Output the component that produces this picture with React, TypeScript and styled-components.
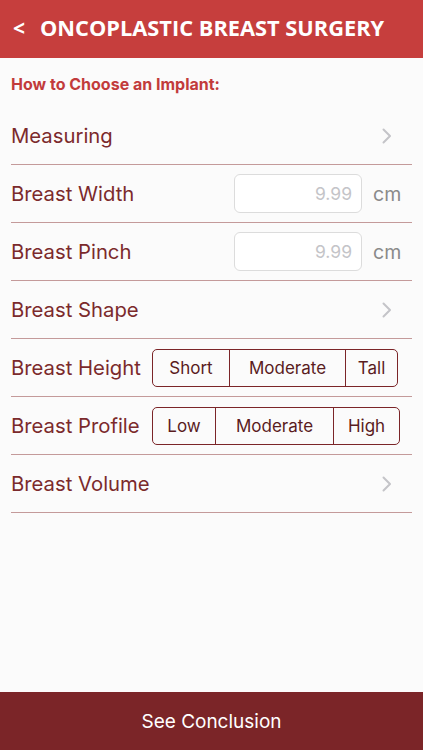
import React from "react";
import styled, { createGlobalStyle } from "styled-components";

const Global = createGlobalStyle`
  html, body { margin: 0; padding: 0; background: #fbfbfb; }
  #root { height: 750px; }
  * { box-sizing: border-box; }
`;

const Screen = styled.div`
  width: 423px;
  height: 750px;
  display: flex;
  flex-direction: column;
  background: #fbfbfb;
  font-family: Inter, "Liberation Sans", sans-serif;
`;

const Header = styled.header`
  height: 58px;
  background: #c63e3d;
  display: flex;
  align-items: center;
  padding: 0 0 3px 13px;
  color: #fff;
  font-family: "Open Sans", "Liberation Sans", sans-serif;
  font-weight: 700;
`;

const Back = styled.span`
  font-size: 21px;
  width: 27px;
`;

const Title = styled.h1`
  margin: 0;
  font-size: 21.8px;
  font-weight: 700;
`;

const Content = styled.main`
  flex: 1;
  padding: 0 11px;
`;

const SectionTitle = styled.div`
  height: 49px;
  display: flex;
  align-items: center;
  padding-top: 2px;
  color: #c23b3b;
  font-weight: 700;
  font-size: 16px;
`;

const Row = styled.div`
  height: 58px;
  display: flex;
  align-items: center;
  border-bottom: 1.5px solid #c49a9a;
`;

const Label = styled.span`
  flex: 1;
  color: #7b2a2c;
  font-size: 20.3px;
  white-space: nowrap;
`;

const Chevron = styled.svg`
  width: 10px;
  height: 16px;
  margin-right: 20px;
`;

const Input = styled.div`
  width: 128px;
  height: 39px;
  border: 1px solid #dcdcdc;
  border-radius: 6px;
  background: #fff;
  display: flex;
  align-items: center;
  justify-content: flex-end;
  padding-right: 9px;
  color: #c4c4c8;
  font-size: 17.5px;
`;

const Unit = styled.span`
  width: 50px;
  padding-left: 11px;
  color: #8a8a8a;
  font-size: 19.5px;
`;

const Segmented = styled.div<{ $w: number }>`
  display: flex;
  width: ${(p) => p.$w}px;
  height: 38px;
  border: 1.5px solid #7b2528;
  border-radius: 5px;
  overflow: hidden;
  margin-right: ${(p) => 412 - 152 - p.$w}px;
`;

const Segment = styled.div<{ $w: number }>`
  width: ${(p) => p.$w}px;
  display: flex;
  align-items: center;
  justify-content: center;
  color: #5a1c1e;
  font-size: 17px;
  & + & { border-left: 1.5px solid #7b2528; }
  &:last-child { flex: 1; }
`;

const Footer = styled.footer`
  height: 58px;
  background: #7b2528;
  color: #fff;
  display: flex;
  align-items: center;
  justify-content: center;
  font-size: 19px;
`;

const ChevronIcon = () => (
  <Chevron viewBox="0 0 10 16">
    <path d="M1.5 1.5 L8 8 L1.5 14.5" fill="none" stroke="#c4c4c8" strokeWidth="2" strokeLinecap="round" strokeLinejoin="round" />
  </Chevron>
);

export default function App() {
  return (
    <>
      <Global />
      <Screen>
        <Header>
          <Back>&lt;</Back>
          <Title>ONCOPLASTIC BREAST SURGERY</Title>
        </Header>
        <Content>
          <SectionTitle>How to Choose an Implant:</SectionTitle>
          <Row>
            <Label>Measuring</Label>
            <ChevronIcon />
          </Row>
          <Row>
            <Label>Breast Width</Label>
            <Input>9.99</Input>
            <Unit>cm</Unit>
          </Row>
          <Row>
            <Label>Breast Pinch</Label>
            <Input>9.99</Input>
            <Unit>cm</Unit>
          </Row>
          <Row>
            <Label>Breast Shape</Label>
            <ChevronIcon />
          </Row>
          <Row>
            <Label>Breast Height</Label>
            <Segmented $w={246}>
              <Segment $w={76}>Short</Segment>
              <Segment $w={116}>Moderate</Segment>
              <Segment $w={54}>Tall</Segment>
            </Segmented>
          </Row>
          <Row>
            <Label>Breast Profile</Label>
            <Segmented $w={248}>
              <Segment $w={62}>Low</Segment>
              <Segment $w={118}>Moderate</Segment>
              <Segment $w={68}>High</Segment>
            </Segmented>
          </Row>
          <Row>
            <Label>Breast Volume</Label>
            <ChevronIcon />
          </Row>
        </Content>
        <Footer>See Conclusion</Footer>
      </Screen>
    </>
  );
}
